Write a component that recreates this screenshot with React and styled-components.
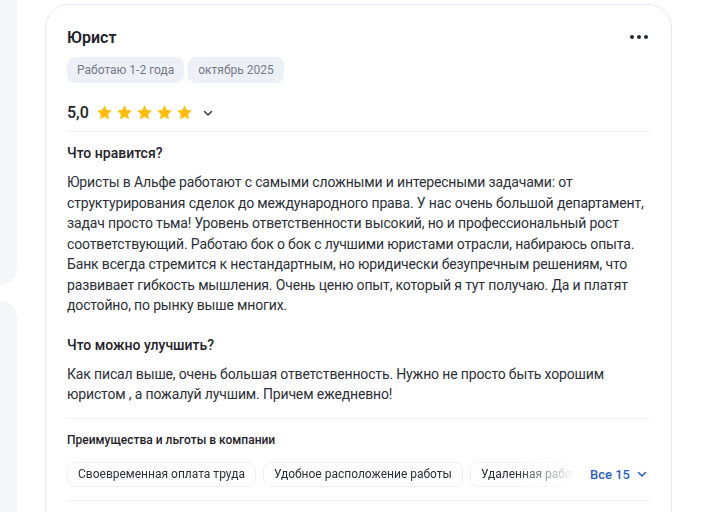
import styled, { createGlobalStyle } from "styled-components";

const GlobalStyle = createGlobalStyle`
  html, body {
    margin: 0;
    padding: 0;
    background: #ffffff;
  }
  body {
    font-family: Roboto, "Noto Sans", sans-serif;
    color: #1f2229;
    overflow: hidden;
  }
`;

const chips = [
  "Своевременная оплата труда",
  "Удобное расположение работы",
  "Удаленная работа",
];

function Star() {
  return (
    <svg width="17" height="17" viewBox="0 0 24 24">
      <path
        d="M12 1.8l3.1 6.6 7.2.9-5.3 5 1.4 7.1L12 17.9l-6.4 3.5L7 14.3l-5.3-5 7.2-.9z"
        fill="#ffbd0a"
      />
    </svg>
  );
}

function Chevron({ color = "#3a3f4a" }) {
  return (
    <svg width="12" height="12" viewBox="0 0 12 12">
      <path
        d="M2.5 4.5L6 8l3.5-3.5"
        fill="none"
        stroke={color}
        strokeWidth="1.6"
        strokeLinecap="round"
        strokeLinejoin="round"
      />
    </svg>
  );
}

export default function App() {
  return (
    <Page>
      <GlobalStyle />
      <Side>
        <SidePanel $top />
        <SidePanel />
      </Side>
      <Card>
        <Header>
          <Title>Юрист</Title>
          <More>
            <span />
            <span />
            <span />
          </More>
        </Header>
        <Tags>
          <Tag>Работаю 1-2 года</Tag>
          <Tag>октябрь 2025</Tag>
        </Tags>
        <Rating>
          <Score>5,0</Score>
          <Stars>
            <Star />
            <Star />
            <Star />
            <Star />
            <Star />
          </Stars>
          <Toggle>
            <Chevron />
          </Toggle>
        </Rating>
        <Divider $gap={5} />
        <Section>
          <SectionTitle>Что нравится?</SectionTitle>
          <Text>
            Юристы в Альфе работают с самыми сложными и интересными задачами: от
            структурирования сделок до международного права. У нас очень большой
            департамент, задач просто тьма! Уровень ответственности высокий, но и
            профессиональный рост соответствующий. Работаю бок о бок с лучшими
            юристами отрасли, набираюсь опыта. Банк всегда стремится к
            нестандартным, но юридически безупречным решениям, что развивает
            гибкость мышления. Очень ценю опыт, который я тут получаю. Да и платят
            достойно, по рынку выше многих.
          </Text>
        </Section>
        <Section>
          <SectionTitle>Что можно улучшить?</SectionTitle>
          <Text>
            Как писал выше, очень большая ответственность. Нужно не просто быть
            хорошим юристом , а пожалуй лучшим. Причем ежедневно!
          </Text>
        </Section>
        <Divider $gap={13} />
        <Benefits>
          <BenefitsTitle>Преимущества и льготы в компании</BenefitsTitle>
          <ChipRow>
            <Chips>
              {chips.map((c) => (
                <Chip key={c}>{c}</Chip>
              ))}
            </Chips>
            <AllLink>
              Все 15
              <Chevron color="#2f5fc4" />
            </AllLink>
          </ChipRow>
        </Benefits>
        <Divider $gap={13} />
      </Card>
    </Page>
  );
}

const Page = styled.div`
  display: flex;
  height: 512px;
  padding-top: 4px;
  box-sizing: border-box;
`;

const Side = styled.div`
  width: 17px;
  margin-top: -4px;
  margin-right: 28px;
  display: flex;
  flex-direction: column;
  gap: 16px;
  flex-shrink: 0;
`;

const SidePanel = styled.div`
  background: #f5f6f9;
  height: ${(p) => (p.$top ? "297px" : "220px")};
  border-radius: ${(p) => (p.$top ? "0 0 18px 0" : "0 18px 0 0")};
`;

const Card = styled.div`
  width: 627px;
  box-sizing: border-box;
  border: 1px solid #e6e9f0;
  border-radius: 24px;
  padding: 20px 20px 0 21px;
  background: #fff;
  height: 560px;
`;

const Header = styled.div`
  display: flex;
  align-items: center;
  justify-content: space-between;
  height: 24px;
`;

const Title = styled.div`
  font-size: 16px;
  font-weight: 600;
  color: #1f2229;
`;

const More = styled.div`
  display: flex;
  gap: 3px;
  margin-right: 3px;
  span {
    width: 4px;
    height: 4px;
    border-radius: 50%;
    background: #262a33;
  }
`;

const Tags = styled.div`
  display: flex;
  gap: 4px;
  margin-top: 8px;
`;

const Tag = styled.div`
  background: #edf0f6;
  color: #737a88;
  font-size: 12px;
  height: 26px;
  line-height: 26px;
  padding: 0 10px;
  border-radius: 8px;
`;

const Rating = styled.div`
  display: flex;
  align-items: center;
  margin-top: 15px;
  height: 28px;
`;

const Score = styled.div`
  font-size: 16px;
  font-weight: 500;
  color: #1f2229;
  margin-right: 7px;
`;

const Stars = styled.div`
  display: flex;
  gap: 3px;
`;

const Toggle = styled.div`
  display: flex;
  margin-left: 9px;
  margin-top: 1px;
`;

const Divider = styled.div`
  height: 1px;
  background: #f0f2f6;
  margin-top: ${(p) => p.$gap}px;
`;

const Section = styled.div`
  margin-top: 11px;
  & + & {
    margin-top: 19px;
  }
`;

const SectionTitle = styled.div`
  font-size: 14px;
  font-weight: 500;
  line-height: 20px;
  color: #1f2229;
  margin-bottom: 9px;
`;

const Text = styled.div`
  font-size: 14px;
  line-height: 20.5px;
  letter-spacing: -0.15px;
  color: #2b2f38;
`;

const Benefits = styled.div`
  padding-top: 11px;
`;

const BenefitsTitle = styled.div`
  font-size: 12px;
  font-weight: 500;
  line-height: 20px;
  color: #1f2229;
  margin-bottom: 12px;
`;

const ChipRow = styled.div`
  display: flex;
  align-items: center;
`;

const Chips = styled.div`
  display: flex;
  gap: 7px;
  flex: 1;
  min-width: 0;
  overflow: hidden;
  mask-image: linear-gradient(to right, #000 88%, transparent 100%);
`;

const Chip = styled.div`
  flex-shrink: 0;
  box-sizing: border-box;
  border: 1px solid #eef0f4;
  border-radius: 8px;
  font-size: 12px;
  color: #2b2f38;
  height: 25px;
  line-height: 23px;
  padding: 0 10px;
  white-space: nowrap;
`;

const AllLink = styled.div`
  display: flex;
  align-items: center;
  flex-shrink: 0;
  gap: 6px;
  margin-left: 14px;
  padding-right: 3px;
  color: #2f5fc4;
  font-size: 13px;
  font-weight: 500;
  white-space: nowrap;
`;
